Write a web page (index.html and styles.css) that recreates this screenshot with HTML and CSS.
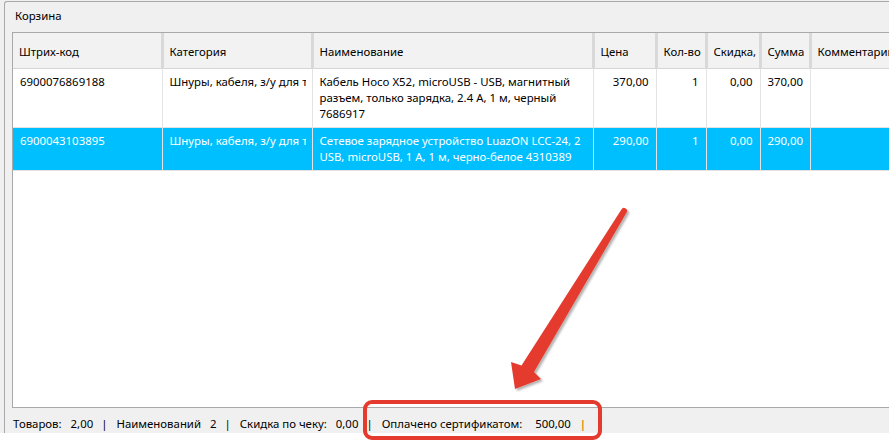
FILE: index.html
```html
<!DOCTYPE html>
<html lang="ru">
<head>
    <meta charset="UTF-8">
    <meta name="viewport" content="width=device-width, initial-scale=1.0">
    <title>Корзина</title>
    <link rel="stylesheet" href="styles.css">
</head>
<body>
    <div class="window">
        <div class="groupbox">
            <div class="grouptitle">Корзина</div>

            <div class="grid">
                <table class="cart">
                    <colgroup>
                        <col style="width:149px">
                        <col style="width:150px">
                        <col style="width:281px">
                        <col style="width:63px">
                        <col style="width:50px">
                        <col style="width:54px">
                        <col style="width:50px">
                        <col style="width:101px">
                    </colgroup>
                    <thead>
                        <tr>
                            <th><div class="cell">Штрих-код</div></th>
                            <th><div class="cell">Категория</div></th>
                            <th><div class="cell">Наименование</div></th>
                            <th><div class="cell">Цена</div></th>
                            <th><div class="cell">Кол-во</div></th>
                            <th><div class="cell">Скидка, %</div></th>
                            <th><div class="cell">Сумма</div></th>
                            <th><div class="cell">Комментарий</div></th>
                        </tr>
                    </thead>
                    <tbody>
                        <tr>
                            <td>6900076869188</td>
                            <td class="clip"><div class="cell">Шнуры, кабеля, з/у для телефонов</div></td>
                            <td>Кабель Hoco X52, microUSB - USB, магнитный разъем, только зарядка, 2.4 A, 1 м, черный 7686917</td>
                            <td class="num">370,00</td>
                            <td class="num">1</td>
                            <td class="num">0,00</td>
                            <td class="num">370,00</td>
                            <td></td>
                        </tr>
                        <tr class="selected">
                            <td>6900043103895</td>
                            <td class="clip"><div class="cell">Шнуры, кабеля, з/у для телефонов</div></td>
                            <td>Сетевое зарядное устройство LuazON LCC-24, 2 USB, microUSB, 1 A, 1 м, черно-белое 4310389</td>
                            <td class="num">290,00</td>
                            <td class="num">1</td>
                            <td class="num">0,00</td>
                            <td class="num">290,00</td>
                            <td></td>
                        </tr>
                    </tbody>
                </table>
            </div>

            <div class="statusbar">
                <span class="lbl">Товаров:</span><span class="val">2,00</span><span class="sep">|</span>
                <span class="lbl">Наименований</span><span class="val">2</span><span class="sep">|</span>
                <span class="lbl">Скидка по чеку:</span><span class="val">0,00</span><span class="sep">|</span>
                <span class="lbl">Оплачено сертификатом:</span><span class="val wide">500,00</span><span class="sep caret">|</span>
            </div>
        </div>
    </div>

    <!-- annotation drawn over the screenshot -->
    <svg class="annotation" width="889" height="443" viewBox="0 0 889 443">
        <defs>
            <filter id="shadow" x="-20%" y="-20%" width="140%" height="140%">
                <feDropShadow dx="2" dy="2" stdDeviation="1" flood-color="#000" flood-opacity="0.3"/>
            </filter>
        </defs>
        <g fill="#e53b2f" filter="url(#shadow)">
            <path d="M621.4 209.4 A3 3 0 0 1 626.6 212.6 L534 372 L541 379 L515 389 L511 362 L521.5 365.5 Z"/>
        </g>
        <rect x="365" y="402" width="235" height="36" rx="7" fill="none" stroke="#e53b2f" stroke-width="4"/>
    </svg>
</body>
</html>
```

FILE: styles.css
```css
body{
  margin:0;
  background:#fff;
  font-family:"Noto Sans", "Open Sans", sans-serif;
  font-size:11.4px;
  color:#000;
}
.window{
  position:relative;
  height:433px;
  padding-top:1px;
  padding-left:4px;
  background:#f0f0f0;
  box-sizing:border-box;
  overflow:hidden;
}
.groupbox{
  height:432px;
  border-top:solid 1px #a9a9a9;
  border-left:solid 1px #a9a9a9;
  border-top-left-radius:3px;
  display:flex;
  flex-direction:column;
}
.grouptitle{
  padding:6px 0 0 10px;
  line-height:16px;
  height:25px;
  box-sizing:border-box;
}
.grid{
  margin-left:7px;
  margin-top:5px;
  height:374px;
  background:#fff;
  border-top:solid 1px #a9a9a9;
  border-left:solid 1px #a9a9a9;
  border-bottom:solid 1px #a9a9a9;
  overflow:hidden;
}
.cart{
  border-collapse:collapse;
  table-layout:fixed;
  width:898px;
}
.cart .cell{
  white-space:nowrap;
  overflow:hidden;
}
.cart th{
  background:#f2f2f2;
  font-weight:normal;
  text-align:left;
  height:32px;
  padding:3px 3px 0 6px;
  border-right:solid 3px #d9d9d9;
  border-bottom:solid 1px #d5d5d5;
  line-height:16px;
}
.cart th:last-child{
  border-right:none;
}
.cart td{
  vertical-align:top;
  padding:5px 7px 5px 7px;
  line-height:16px;
  border-right:solid 1px #e3e3e3;
  border-bottom:solid 1px #e3e3e3;
  overflow:hidden;
}
.cart td.clip{
  padding-right:6px;
}
.cart td.num{
  text-align:right;
}
.cart tr.selected td{
  background:#00bfff;
  color:#fff;
}
.statusbar{
  display:flex;
  padding:8px 0 0 8px;
  line-height:16px;
  white-space:nowrap;
}
.statusbar .val{
  margin-left:9px;
}
.statusbar .val.wide{
  margin-left:13px;
}
.statusbar .sep{
  margin:0 9px 0 8px;
}
.statusbar .caret{
  margin-left:9px;
  color:#e0880f;
  font-weight:bold;
}
.annotation{
  position:absolute;
  left:0;
  top:0;
  pointer-events:none;
}
```
